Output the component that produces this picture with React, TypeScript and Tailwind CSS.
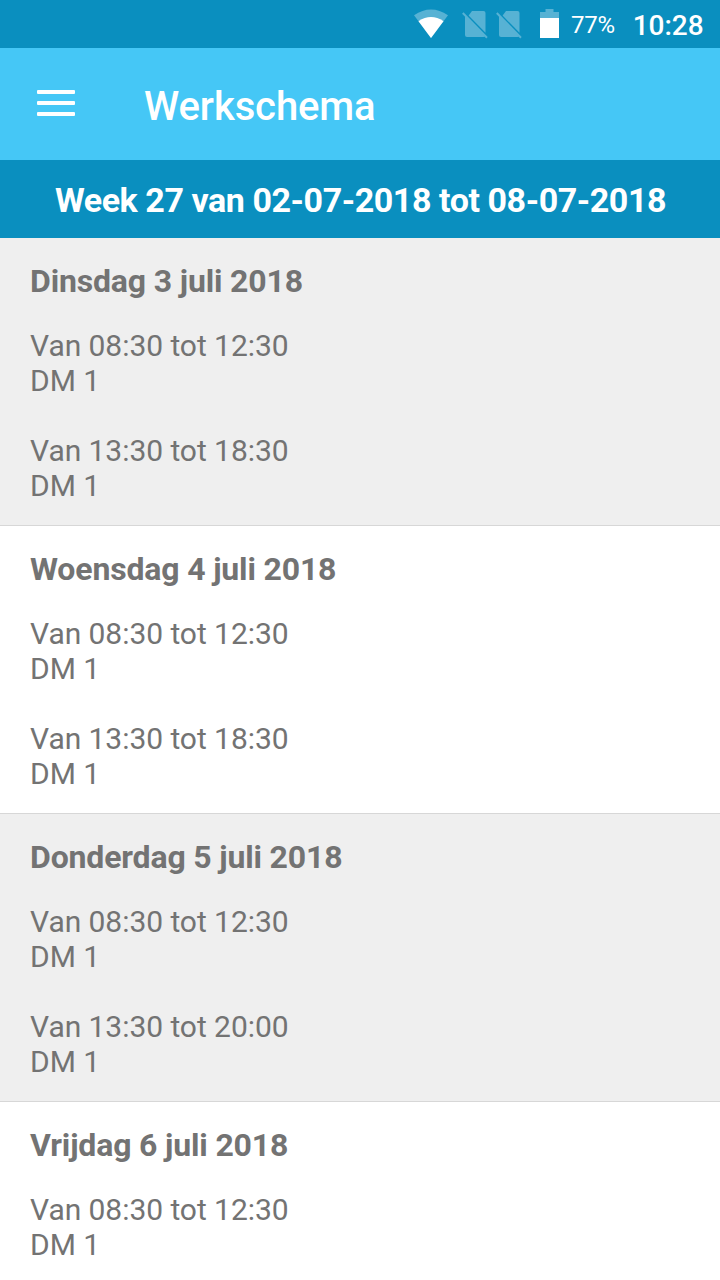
const days = [
  { title: "Dinsdag 3 juli 2018", shifts: ["Van 08:30 tot 12:30", "Van 13:30 tot 18:30"] },
  { title: "Woensdag 4 juli 2018", shifts: ["Van 08:30 tot 12:30", "Van 13:30 tot 18:30"] },
  { title: "Donderdag 5 juli 2018", shifts: ["Van 08:30 tot 12:30", "Van 13:30 tot 20:00"] },
  { title: "Vrijdag 6 juli 2018", shifts: ["Van 08:30 tot 12:30"] },
];

function NoSim() {
  return (
    <svg width="26" height="30" viewBox="0 0 26 30" className="shrink-0">
      <path d="M10 2H21.5Q23.5 2 23.5 4V23.8L6.6 6.6Z" fill="#57b2d4" />
      <path d="M3 6.5L23 27.2Q22.5 28 21.5 28H5Q3 28 3 26Z" fill="#57b2d4" />
      <path d="M0.8 4L25 28.7" stroke="#57b2d4" strokeWidth="2" />
    </svg>
  );
}

export default function App() {
  return (
    <div className="flex h-[1280px] w-[720px] flex-col overflow-hidden bg-white font-['Roboto',sans-serif]">
      <div className="flex h-12 shrink-0 items-center bg-[#0a8fbf] pl-[414px] text-white">
        <svg width="34" height="30" viewBox="0 0 34 30" className="mr-[14px] shrink-0">
          <path d="M0 6.3Q17 -5.3 34 6.3L17 29Z" fill="#57b2d4" />
          <path d="M4.5 12.2Q17 4 29.5 12.2L17 29Z" fill="#fff" />
        </svg>
        <div className="flex gap-2">
          <NoSim />
          <NoSim />
        </div>
        <svg width="19" height="30" viewBox="0 0 19 30" className="ml-[18px] shrink-0">
          <path d="M5.5 0H13.5V3H19V9H0V3H5.5Z" fill="#57b2d4" />
          <path d="M0 9H19V29H0Z" fill="#fff" />
        </svg>
        <span className="ml-3 pt-0.5 text-[24px] tracking-[-0.3px]">77%</span>
        <span className="ml-[18px] pt-[3px] text-[28px] font-medium">10:28</span>
      </div>
      <div className="flex h-28 shrink-0 items-center bg-[#45c7f6] pl-[37px] text-white">
        <div className="flex w-[107px] flex-col gap-[7px] pb-[3px]">
          <div className="h-1 w-[38px] rounded-[1px] bg-white" />
          <div className="h-1 w-[38px] rounded-[1px] bg-white" />
          <div className="h-1 w-[38px] rounded-[1px] bg-white" />
        </div>
        <h1 className="pt-1.5 text-[40px] font-medium tracking-[-0.1px]">Werkschema</h1>
      </div>
      <div className="flex h-[78px] shrink-0 items-center justify-center bg-[#0a8fbf] pt-0.5 pl-px text-[34px] font-bold tracking-[-0.43px] text-white">
        Week 27 van 02-07-2018 tot 08-07-2018
      </div>
      {days.map((day) => (
        <section key={day.title} className="h-72 shrink-0 border-b border-[#d7d7d7] px-[30px] pt-6 text-[30px] leading-[35px] tracking-[-0.05px] text-[#737373] odd:bg-white even:bg-[#efefef]">
          <h2 className="mb-[28px] text-[32px] leading-[38px] font-bold tracking-[-0.16px]">{day.title}</h2>
          {day.shifts.map((shift) => (
            <div key={shift} className="mb-[35px]">
              <p>{shift}</p>
              <p>DM 1</p>
            </div>
          ))}
        </section>
      ))}
    </div>
  );
}
